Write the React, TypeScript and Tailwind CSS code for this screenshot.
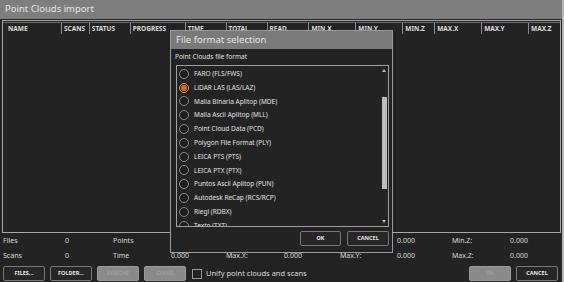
import React from "react";

const cols: [string, number][] = [
  ["NAME", 58],
  ["SCANS", 28],
  ["STATUS", 41],
  ["PROGRESS", 55],
  ["TIME", 41],
  ["TOTAL", 41],
  ["READ", 42],
  ["MIN.X", 47],
  ["MIN.Y", 47],
  ["MIN.Z", 32],
  ["MAX.X", 47],
  ["MAX.Y", 47],
  ["MAX.Z", 32],
];

const formats = [
  "FARO (FLS/FWS)",
  "LiDAR LAS (LAS/LAZ)",
  "Malla Binaria Aplitop (MDE)",
  "Malla Ascii Aplitop (MLL)",
  "Point Cloud Data (PCD)",
  "Polygon File Format (PLY)",
  "LEICA PTS (PTS)",
  "LEICA PTX (PTX)",
  "Puntos Ascii Aplitop (PUN)",
  "Autodesk ReCap (RCS/RCP)",
  "Riegl (RDBX)",
  "Texto (TXT)",
];

function Btn({ label, disabled, w = "w-[42px]" }: { label: string; disabled?: boolean; w?: string }) {
  return (
    <div
      className={`${w} h-[15px] flex items-center justify-center rounded-[2px] border text-[5.5px] font-bold ${
        disabled
          ? "bg-[#8a8a8a] border-[#9a9a9a] text-[#a0a0a0]"
          : "bg-[#262626] border-[#7a7a7a] text-[#e8e8e8]"
      }`}
    >
      {label}
    </div>
  );
}

const row1 = ["Files", "0", "Points", "", "Min.X:", "0.000", "Min.Y:", "0.000", "Min.Z:", "0.000"];
const row2 = ["Scans", "0", "Time", "0.000", "Max.X:", "0.000", "Max.Y:", "0.000", "Max.Z:", "0.000"];
const infoW = [62, 48, 58, 55, 58, 56, 57, 55, 58, 50];

export default function App() {
  return (
    <div
      className="relative w-[564px] h-[282px] bg-[#232323] overflow-hidden flex flex-col border-r-2 border-[#b5b5b5]"
      style={{ fontFamily: '"Noto Sans", "Open Sans", sans-serif' }}
    >
      {/* title bar */}
      <div className="h-[19px] bg-[#7e7e7e] flex items-center pl-[5px] text-[9.5px] text-[#e6e6e6] shrink-0">
        Point Clouds import
      </div>

      {/* table */}
      <div className="ml-[2px] mr-[1px] mt-[1px] h-[213px] border border-[#a8a8a8] shrink-0 flex flex-col">
        <div className="border-t border-[#6a6a6a] mt-[1px] flex h-[12px]">
          {cols.map(([n, w], i) => (
            <div
              key={n}
              className={`h-full flex items-center text-[6.5px] font-bold text-[#dcdcdc] ${
                i === 0 ? "pl-[5px]" : "pl-[2px] border-l border-[#8a8a8a]"
              }`}
              style={{ width: w }}
            >
              {n}
            </div>
          ))}
        </div>
      </div>

      {/* info */}
      <div className="flex flex-col gap-[4px] pl-[3px] mt-[3px] text-[7px] text-[#d8d8d8]">
        {[row1, row2].map((r, ri) => (
          <div key={ri} className="flex h-[11px] items-center">
            {r.map((t, i) => (
              <div key={i} style={{ width: infoW[i] }}>
                {t}
              </div>
            ))}
          </div>
        ))}
      </div>

      {/* buttons */}
      <div className="flex items-center mt-[4px] px-[3px]">
        <div className="flex gap-[5px] items-center">
          <Btn label="FILES..." />
          <Btn label="FOLDER..." />
          <Btn label="REMOVE" disabled />
          <Btn label="CLEAR" disabled />
          <div className="ml-[1px] w-[10px] h-[10px] border border-[#9a9a9a] bg-[#222]" />
          <span className="text-[7.5px] text-[#dcdcdc] ml-[-1px]">Unify point clouds and scans</span>
        </div>
        <div className="ml-auto flex gap-[5px] mr-[1px]">
          <Btn label="OK" disabled />
          <Btn label="CANCEL" />
        </div>
      </div>

      {/* dialog */}
      <div className="absolute left-[170px] top-[30px] w-[223px] h-[223px] bg-[#232323] border border-[#9a9a9a] flex flex-col">
        <div className="h-[18px] bg-[#7a7a7a] flex items-center pl-[5px] text-[9.5px] text-[#e6e6e6]">
          File format selection
        </div>
        <div className="pl-[4px] pt-[3px] h-[16px] text-[6.5px] text-[#e0e0e0]">Point Clouds file format</div>
        <div className="ml-[5px] mr-[3px] h-[162px] border border-[#a0a0a0] flex">
          <div className="flex-1 flex flex-col overflow-hidden pl-[2px] pt-[1px]">
            {formats.map((f, i) => (
              <div key={f} className="h-[13.8px] shrink-0 flex items-center gap-[5px]">
                {i === 1 ? (
                  <div className="w-[10px] h-[10px] rounded-full border border-[#d88a50] bg-[#1e1e1e] flex items-center justify-center">
                    <div className="w-[6px] h-[6px] rounded-full bg-[#d0641e]" />
                  </div>
                ) : (
                  <div className="w-[10px] h-[10px] rounded-full border border-[#8a8a8a] bg-[#1e1e1e]" />
                )}
                <span className="text-[6.5px] text-[#e2e2e2]">{f}</span>
              </div>
            ))}
          </div>
          <div className="w-[8px] flex flex-col items-center py-[3px]">
            <div className="w-0 h-0 border-l-[2.5px] border-r-[2.5px] border-b-[3px] border-l-transparent border-r-transparent border-b-[#bbb]" />
            <div className="w-[5px] h-[92px] mt-[25px] bg-[#bdbdbd]" />
            <div className="flex-1" />
            <div className="w-0 h-0 border-l-[2.5px] border-r-[2.5px] border-t-[3px] border-l-transparent border-r-transparent border-t-[#bbb]" />
          </div>
        </div>
        <div className="flex justify-end gap-[6px] pr-[3px] mt-[4px]">
          <Btn label="OK" w="w-[41px]" />
          <Btn label="CANCEL" w="w-[42px]" />
        </div>
      </div>
    </div>
  );
}
